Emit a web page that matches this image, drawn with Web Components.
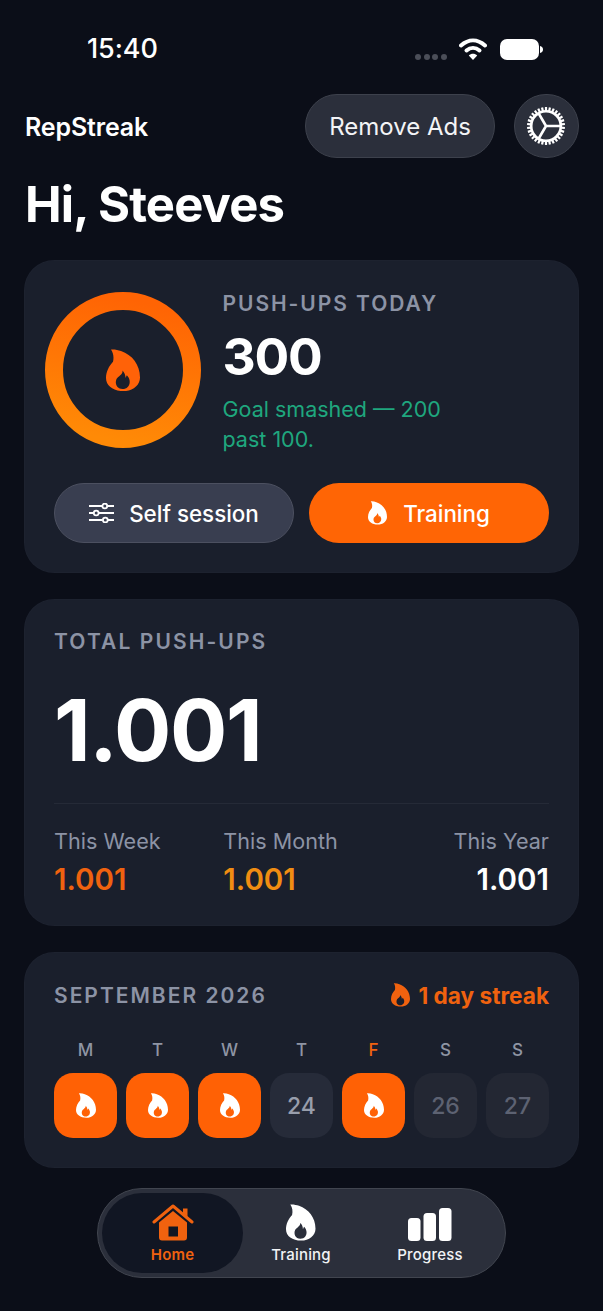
<!DOCTYPE html>
<html lang="en">
<head>
<meta charset="utf-8">
<title>RepStreak</title>
<style>
    html, body { margin: 0; padding: 0; background: #0b0e18; }
    body { width: 603px; height: 1311px; overflow: hidden; font-family: Inter, "Liberation Sans", sans-serif; color: #fff; }
    main { display: flex; flex-direction: column; }
</style>
</head>
<body>
<main>
    <status-bar time="15:40"></status-bar>
    <app-header title="RepStreak" action="Remove Ads" greeting="Hi, Steeves"></app-header>
    <today-card></today-card>
    <total-card></total-card>
    <month-card></month-card>
    <tab-bar></tab-bar>
</main>
<script>
class FlameIcon extends HTMLElement {
    constructor() {
        super();
        this.attachShadow({ mode: 'open' });
        const w = this.getAttribute('size') || 20;
        this.shadowRoot.innerHTML = `
            <style>
                :host { display: inline-flex; flex: none; color: inherit; }
                svg { display: block; fill: currentColor; }
            </style>
            <svg width="${w}" height="${w * 1.24}" viewBox="0 0 34 40" preserveAspectRatio="none">
                <path fill-rule="evenodd" d="M5 .5C9 .3 12 1 15 2 26 5.500 34 15 34 27 34 34.500 26.500 40 17.500 40 7.500 40 0 35 0 27.500 0 21.500 3 16 7 12 8 8 7.500 4 5 .5ZM16.500 20.500C17 24 12.500 25.500 10.500 28.500 8.500 33 11 38 16.500 38 21.500 38 24.500 34 23.500 29.500 23 27.500 22 26 20.800 25L19.500 27.500C19.500 25 18.500 22.500 16.500 20.500Z"/>
            </svg>
        `;
    }
}
customElements.define('flame-icon', FlameIcon);

class AppCard extends HTMLElement {
    constructor() {
        super();
        this.attachShadow({ mode: 'open' });
        this.shadowRoot.innerHTML = `
            <style>
                :host {
                    display: block;
                    background: #1a1f2c;
                    border-radius: 30px;
                    box-shadow: inset 0 0 0 1px rgba(255, 255, 255, 0.015);
                }
            </style>
            <slot></slot>
        `;
    }
}
customElements.define('app-card', AppCard);

class StatusBar extends HTMLElement {
    constructor() {
        super();
        this.attachShadow({ mode: 'open' });
        this.shadowRoot.innerHTML = `
            <style>
                :host { display: flex; align-items: center; height: 94px; padding: 0 60px 0 87px; box-sizing: border-box; }
                .time { font-size: 27px; font-weight: 500; line-height: 96px; height: 96px; margin-top: 4px; letter-spacing: -0.1px; }
                .right { margin-left: auto; display: flex; align-items: center; margin-top: 4px; }
                .dots { display: flex; gap: 2.700px; margin: 16px 12px 0 0; }
                .dots i { width: 6px; height: 6px; border-radius: 50%; background: #4b4e58; }
                svg { display: block; }
                .battery { margin-left: 13px; }
            </style>
            <div class="time">${this.getAttribute('time')}</div>
            <div class="right">
                <div class="dots"><i></i><i></i><i></i><i></i></div>
                <svg width="28" height="22" viewBox="0 0 28 22" fill="none" stroke="#fff" stroke-width="4" stroke-linecap="round">
                    <path d="M2 7.500C9.500 .8 18.500 .8 26 7.500"/>
                    <path d="M7.500 12.500C11.500 9 16.500 9 20.500 12.500"/>
                    <path d="M14 22L9.800 17.500C12 15.300 16 15.300 18.200 17.500Z" fill="#fff" stroke="none"/>
                </svg>
                <svg class="battery" width="43" height="21" viewBox="0 0 43 21" fill="#fff">
                    <rect width="39" height="21" rx="7"/>
                    <path d="M40 7c2 .4 3 1.700 3 3.500s-1 3.100-3 3.500z"/>
                </svg>
            </div>
        `;
    }
}
customElements.define('status-bar', StatusBar);

class AppHeader extends HTMLElement {
    constructor() {
        super();
        this.attachShadow({ mode: 'open' });
        let teeth = '';
        for (let i = 0; i < 30; i++) {
            teeth += `<rect x="18.900" y="1" width="2.200" height="4" transform="rotate(${i * 12} 20 20)"/>`;
        }
        this.shadowRoot.innerHTML = `
            <style>
                :host { display: block; padding: 0 24px 0 25px; }
                .row { display: flex; align-items: center; height: 64px; }
                .title { font-size: 25px; font-weight: 600; letter-spacing: -0.15px; padding-top: 1px; }
                .pill, .gear {
                    display: flex;
                    align-items: center;
                    justify-content: center;
                    height: 64px;
                    box-sizing: border-box;
                    background: #2b2f3b;
                    border: 1px solid #3d414c;
                    border-radius: 32px;
                }
                .pill { margin-left: auto; width: 190px; font-size: 24px; font-weight: 400; color: #f3f4f6; padding-top: 1px; }
                .gear { margin-left: 19px; width: 65px; }
                svg { display: block; transform: translateX(-1px); }
                h1 { margin: 19px 0 0; font-size: 49px; line-height: 56px; font-weight: 700; letter-spacing: -0.850px; }
            </style>
            <div class="row">
                <div class="title">${this.getAttribute('title')}</div>
                <div class="pill">${this.getAttribute('action')}</div>
                <div class="gear">
                    <svg width="40" height="40" viewBox="0 0 40 40" fill="#fff">
                        ${teeth}
                        <circle cx="20" cy="20" r="14.800" fill="none" stroke="#fff" stroke-width="2.600"/>
                        <path d="M20 20H34M20 20L13 8M20 20L13 32" fill="none" stroke="#fff" stroke-width="2.600" stroke-linecap="round"/>
                    </svg>
                </div>
            </div>
            <h1>${this.getAttribute('greeting')}</h1>
        `;
    }
}
customElements.define('app-header', AppHeader);

class TodayCard extends HTMLElement {
    constructor() {
        super();
        this.attachShadow({ mode: 'open' });
        this.shadowRoot.innerHTML = `
            <style>
                :host { display: block; margin: 27px 24px 0; }
                app-card { height: 313px; padding: 32px 30px 0; box-sizing: border-box; }
                .top { display: flex; margin-left: -9px; }
                .ring { position: relative; flex: none; width: 156px; height: 156px; display: flex; align-items: center; justify-content: center; color: #ff6208; }
                .ring svg { position: absolute; inset: 0; }
                .info { margin-left: 21.500px; margin-top: -1px; }
                .label { font-size: 21px; line-height: 26px; font-weight: 600; letter-spacing: 1.950px; color: #8c93a5; }
                .value { font-size: 51.500px; line-height: 62px; font-weight: 700; letter-spacing: -1.200px; margin-top: 8px; }
                .note { font-size: 21.500px; line-height: 30px; color: #1fa77e; margin-top: 7px; width: 240px; }
                .buttons { display: grid; grid-template-columns: 240px 240px; gap: 15px; margin-top: 29px; }
                .btn {
                    display: flex;
                    align-items: center;
                    justify-content: center;
                    gap: 15px;
                    height: 60px;
                    box-sizing: border-box;
                    border-radius: 30px;
                    font-size: 22.400px;
                    font-weight: 500;
                }
                .self { background: #393e50; border: 1px solid #4c5060; }
                .train { background: #ff6505; color: #fff; gap: 16px; }
                svg { display: block; }
            </style>
            <app-card>
                <div class="top">
                    <div class="ring">
                        <svg width="156" height="156" viewBox="0 0 156 156" fill="none">
                            <defs>
                                <linearGradient id="ring" x1="0.600" y1="0" x2="0.400" y2="1">
                                    <stop offset="0" stop-color="#ff6404"/>
                                    <stop offset="1" stop-color="#ff8a06"/>
                                </linearGradient>
                            </defs>
                            <circle cx="78" cy="78" r="69" stroke="url(#ring)" stroke-width="18"/>
                        </svg>
                        <flame-icon size="34"></flame-icon>
                    </div>
                    <div class="info">
                        <div class="label">PUSH-UPS TODAY</div>
                        <div class="value">300</div>
                        <div class="note">Goal smashed — 200 past 100.</div>
                    </div>
                </div>
                <div class="buttons">
                    <div class="btn self">
                        <svg width="25" height="20" viewBox="0 0 25 20" fill="none" stroke="#fff" stroke-width="1.800">
                            <path d="M0 3H13M18.500 3H25M0 10H4.500M10 10H25M0 17H13.500M19 17H25"/>
                            <circle cx="15.800" cy="3" r="2.400"/>
                            <circle cx="7.200" cy="10" r="2.400"/>
                            <circle cx="16.300" cy="17" r="2.400"/>
                        </svg>
                        <span>Self session</span>
                    </div>
                    <div class="btn train"><flame-icon size="19"></flame-icon><span>Training</span></div>
                </div>
            </app-card>
        `;
    }
}
customElements.define('today-card', TodayCard);

class StatCell extends HTMLElement {
    constructor() {
        super();
        this.attachShadow({ mode: 'open' });
        this.shadowRoot.innerHTML = `
            <style>
                :host { display: block; }
                :host([end]) { text-align: right; }
                .name { font-size: 21.600px; line-height: 28px; color: #8c93a5; }
                .num { font-size: 29.500px; line-height: 36px; font-weight: 600; margin-top: 6px; color: ${this.getAttribute('color') || '#fff'}; }
            </style>
            <div class="name">${this.getAttribute('name')}</div>
            <div class="num">${this.getAttribute('value')}</div>
        `;
    }
}
customElements.define('stat-cell', StatCell);

class TotalCard extends HTMLElement {
    constructor() {
        super();
        this.attachShadow({ mode: 'open' });
        this.shadowRoot.innerHTML = `
            <style>
                :host { display: block; margin: 26px 24px 0; }
                app-card { height: 327px; padding: 30px 30px 0; box-sizing: border-box; }
                .label { font-size: 21px; line-height: 26px; font-weight: 600; letter-spacing: 2.100px; color: #8c93a5; }
                .big { font-size: 85px; line-height: 100px; font-weight: 700; letter-spacing: -1.300px; margin-top: 26px; }
                hr { border: 0; height: 1px; background: #252a37; margin: 22px 0 0; }
                .stats { display: grid; grid-template-columns: repeat(3, 1fr); column-gap: 13px; margin-top: 23px; }
            </style>
            <app-card>
                <div class="label">TOTAL PUSH-UPS</div>
                <div class="big">1.001</div>
                <hr>
                <div class="stats">
                    <stat-cell name="This Week" value="1.001" color="#f0620f"></stat-cell>
                    <stat-cell name="This Month" value="1.001" color="#f08d12"></stat-cell>
                    <stat-cell name="This Year" value="1.001" end></stat-cell>
                </div>
            </app-card>
        `;
    }
}
customElements.define('total-card', TotalCard);

class DayCell extends HTMLElement {
    constructor() {
        super();
        this.attachShadow({ mode: 'open' });
        const done = this.hasAttribute('done');
        this.shadowRoot.innerHTML = `
            <style>
                :host { display: flex; flex-direction: column; align-items: center; }
                .name { font-size: 17px; line-height: 22px; font-weight: 500; color: #8f95a4; }
                :host([today]) .name { color: #f0620f; }
                .box {
                    display: flex;
                    align-items: center;
                    justify-content: center;
                    width: 63px;
                    height: 65px;
                    margin-top: 12px;
                    border-radius: 19px;
                    background: #262b39;
                    color: #989eac;
                    font-size: 23px;
                    font-weight: 500;
                }
                :host([done]) .box { background: #ff6105; color: #fff; }
                :host([faded]) .box { background: #232733; color: #5d6272; }
            </style>
            <div class="name">${this.getAttribute('name')}</div>
            <div class="box">${done ? '<flame-icon size="20"></flame-icon>' : this.getAttribute('day')}</div>
        `;
    }
}
customElements.define('day-cell', DayCell);

class MonthCard extends HTMLElement {
    constructor() {
        super();
        this.attachShadow({ mode: 'open' });
        this.shadowRoot.innerHTML = `
            <style>
                :host { display: block; margin: 26px 24px 0; }
                app-card { height: 216px; padding: 29px 30px 0; box-sizing: border-box; }
                .head { display: flex; align-items: center; justify-content: space-between; height: 28px; }
                .label { font-size: 21px; font-weight: 600; letter-spacing: 2px; color: #8c93a5; }
                .streak { display: flex; align-items: center; gap: 9px; font-size: 22.600px; font-weight: 700; color: #f0620f; }
                .grid { display: grid; grid-template-columns: repeat(7, 63px); column-gap: 9px; margin-top: 30px; }
            </style>
            <app-card>
                <div class="head">
                    <div class="label">SEPTEMBER 2026</div>
                    <div class="streak"><flame-icon size="19"></flame-icon><span>1 day streak</span></div>
                </div>
                <div class="grid">
                    <day-cell name="M" done></day-cell>
                    <day-cell name="T" done></day-cell>
                    <day-cell name="W" done></day-cell>
                    <day-cell name="T" day="24"></day-cell>
                    <day-cell name="F" done today></day-cell>
                    <day-cell name="S" day="26" faded></day-cell>
                    <day-cell name="S" day="27" faded></day-cell>
                </div>
            </app-card>
        `;
    }
}
customElements.define('month-card', MonthCard);

class TabBar extends HTMLElement {
    constructor() {
        super();
        this.attachShadow({ mode: 'open' });
        this.shadowRoot.innerHTML = `
            <style>
                :host { display: flex; justify-content: center; margin: 20px 0 0; }
                nav {
                    display: grid;
                    grid-template-columns: 141px 116px 142px;
                    width: 409px;
                    height: 90px;
                    box-sizing: border-box;
                    padding: 4px;
                    background: #2b2f3b;
                    border: 1px solid #41454f;
                    border-radius: 45px;
                }
                .tab {
                    display: flex;
                    flex-direction: column;
                    align-items: center;
                    justify-content: flex-end;
                    height: 80px;
                    box-sizing: border-box;
                    padding-bottom: 9px;
                    font-size: 15px;
                    line-height: 18px;
                    font-weight: 500;
                    letter-spacing: 0.200px;
                    color: #f2f3f5;
                }
                .on { background: #111623; border-radius: 40px; color: #f0620f; font-weight: 600; }
                .art { height: 38px; margin-bottom: 5px; display: flex; align-items: flex-end; color: #fff; }
                svg { display: block; }
            </style>
            <nav>
                <div class="tab on">
                    <div class="art">
                        <svg width="42" height="37" viewBox="0 0 42 37" fill="#f0620f">
                            <path fill-rule="evenodd" d="M7 18.500L21 7 35 18.500V33.500A3 3 0 0 1 32 36.500H10A3 3 0 0 1 7 33.500ZM16.500 22.500V32.500H26V22.500Z"/>
                            <path d="M31 4.500h4.500V13L31 9z"/>
                            <path d="M2 18L21 2 40 18" fill="none" stroke="#f0620f" stroke-width="3" stroke-linecap="round" stroke-linejoin="round"/>
                        </svg>
                    </div>
                    <span>Home</span>
                </div>
                <div class="tab"><div class="art"><flame-icon size="29.500"></flame-icon></div><span>Training</span></div>
                <div class="tab">
                    <div class="art">
                        <svg width="44" height="33" viewBox="0 0 44 33" fill="#fff">
                            <rect y="10" width="12.500" height="23" rx="3.500"/>
                            <rect x="15.500" y="5" width="12.500" height="28" rx="3.500"/>
                            <rect x="31" width="12.500" height="33" rx="3.500"/>
                        </svg>
                    </div>
                    <span>Progress</span>
                </div>
            </nav>
        `;
    }
}
customElements.define('tab-bar', TabBar);
</script>
</body>
</html>
